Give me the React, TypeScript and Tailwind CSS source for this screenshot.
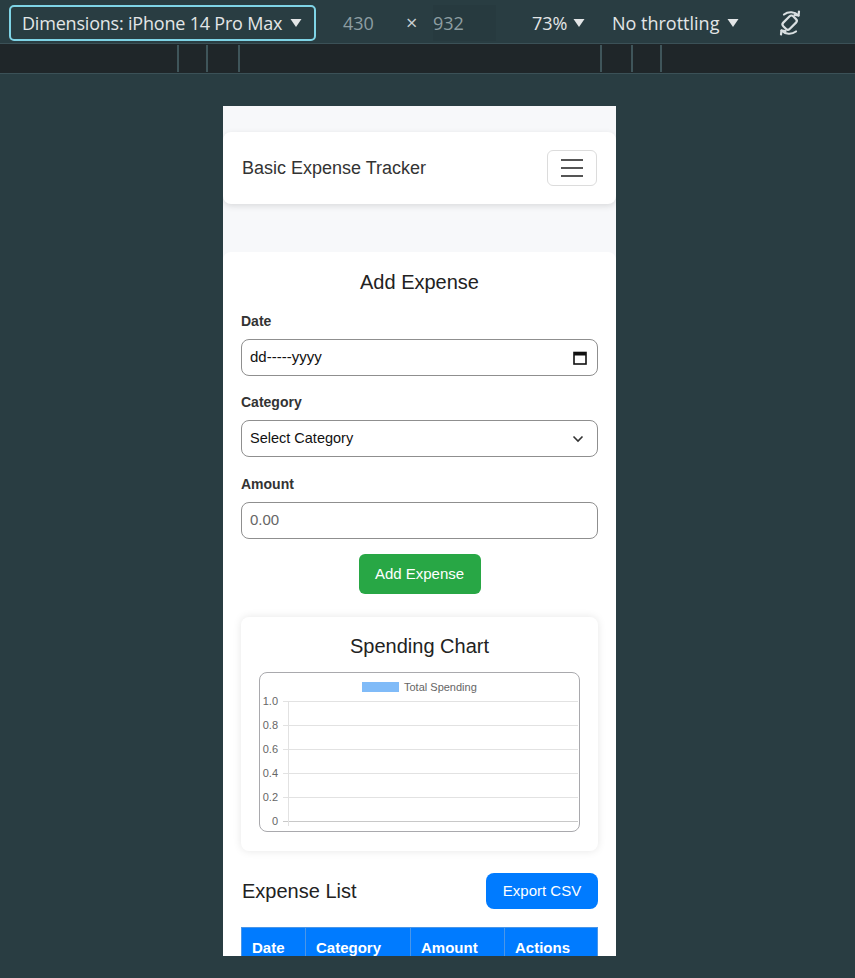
import React from 'react';

const Caret: React.FC<{ className?: string }> = ({ className }) => (
  <svg width="12" height="10" viewBox="0 0 12 10" className={className}>
    <path d="M0.5 1 L11.5 1 L6 9 Z" fill="currentColor" />
  </svg>
);

const RotateIcon: React.FC = () => (
  <svg width="30" height="30" viewBox="0 0 30 30" fill="none" stroke="#d9dfe1" strokeWidth="2.2" strokeLinecap="round">
    <rect x="10" y="8" width="9" height="14" rx="2.5" transform="rotate(45 15 15)" />
    <path d="M9 6.5 A11 11 0 0 1 23.5 7.5" />
    <path d="M21 23.5 A11 11 0 0 1 6.5 22.5" />
    <path d="M23.5 7.5 L24 3.5 M23.5 7.5 L19.5 7" />
    <path d="M6.5 22.5 L6 26.5 M6.5 22.5 L10.5 23" />
  </svg>
);

const Toolbar: React.FC = () => (
  <div className="h-[43px] pt-[3px] flex items-center bg-[#293d42] text-[#e3e6e7] font-['Open_Sans',sans-serif] text-[18px]">
    <div className="ml-[9px] h-[36px] w-[307px] border-2 border-[#7fd4e6] rounded-[5px] flex items-center pl-[11px] gap-[8px]">
      <span className="tracking-[-0.2px]">Dimensions: iPhone 14 Pro Max</span>
      <Caret />
    </div>
    <div className="ml-[20px] w-[70px] h-[36px] flex items-center pl-[7px] text-[#8d9ea2]">430</div>
    <div className="w-[27px] flex items-center text-[20px] text-[#c9d0d2]">×</div>
    <div className="w-[63px] h-[36px] flex items-center text-[#8d9ea2] bg-[#273a3f]">932</div>
    <div className="w-[36px]" />
    <div className="w-[80px] flex items-center gap-[6px]">
      <span>73%</span>
      <Caret />
    </div>
    <div className="w-[163px] flex items-center gap-[8px]">
      <span>No throttling</span>
      <Caret />
    </div>
    <div className="flex items-center">
      <RotateIcon />
    </div>
  </div>
);

const Ruler: React.FC = () => (
  <div className="h-[31px] bg-[#1f2629] border-t border-b border-[#3b5157] flex items-stretch py-[1px]">
    <div className="w-[177px]" />
    <div className="w-[2px] bg-[#3f555a]" />
    <div className="w-[27px]" />
    <div className="w-[2px] bg-[#3f555a]" />
    <div className="w-[30px]" />
    <div className="w-[2px] bg-[#3f555a]" />
    <div className="w-[360px]" />
    <div className="w-[2px] bg-[#3f555a]" />
    <div className="w-[29px]" />
    <div className="w-[2px] bg-[#3f555a]" />
    <div className="w-[27px]" />
    <div className="w-[2px] bg-[#3f555a]" />
  </div>
);

const CalendarIcon: React.FC = () => (
  <svg width="14" height="14" viewBox="0 0 14 14">
    <rect x="1" y="1.5" width="12" height="11.5" fill="none" stroke="#111" strokeWidth="1.6" />
    <rect x="1" y="1.5" width="12" height="3" fill="#111" />
  </svg>
);

const Chevron: React.FC = () => (
  <svg width="12" height="8" viewBox="0 0 12 8" fill="none" stroke="#333" strokeWidth="1.6">
    <path d="M1.5 1.5 L6 6 L10.5 1.5" />
  </svg>
);

const ChartArea: React.FC = () => {
  const ticks = ['1.0', '0.8', '0.6', '0.4', '0.2', '0'];
  return (
    <svg width="318" height="158" viewBox="0 0 318 158" className="block">
      <rect x="102" y="9" width="37" height="10" fill="#80bbf8" />
      <text x="144" y="18" fontSize="11" fill="#666" fontFamily="Liberation Sans, Arial, sans-serif">Total Spending</text>
      {ticks.map((t, i) => {
        const y = 28 + i * 24;
        return (
          <g key={t}>
            <line x1="23" y1={y + 0.5} x2="318" y2={y + 0.5} stroke={i === 5 ? '#c8c8c8' : '#e2e2e2'} strokeWidth="1" />
            <text x="18" y={y + 4} fontSize="11" fill="#666" textAnchor="end" fontFamily="Liberation Sans, Arial, sans-serif">{t}</text>
          </g>
        );
      })}
      <line x1="28.5" y1="28" x2="28.5" y2="153" stroke="#e2e2e2" strokeWidth="1" />
    </svg>
  );
};

const Field: React.FC<{ label: string; children: React.ReactNode; gap?: string }> = ({ label, children, gap = 'mt-[16px]' }) => (
  <div className={gap}>
    <div className="text-[14px] leading-[20px] font-bold text-[#333]">{label}</div>
    <div className="mt-[8px] h-[37px] border border-[#8f8f8f] rounded-[8px] flex items-center px-[8px] text-[15px] bg-white">
      {children}
    </div>
  </div>
);

export default function App() {
  return (
    <div className="w-[855px] h-[978px] bg-[#293d42] overflow-hidden">
      <Toolbar />
      <Ruler />
      <div className="ml-[223px] mt-[32px] w-[393px] h-[850px] bg-[#f7f8fa] overflow-hidden pt-[26px] font-['Liberation_Sans',Arial,sans-serif] text-[#222]">
        <nav className="h-[72px] bg-white rounded-[8px] shadow-[0_2px_6px_rgba(0,0,0,0.12)] flex items-center justify-between pl-[19px] pr-[19px]">
          <span className="text-[18px] text-[#333]">Basic Expense Tracker</span>
          <button className="w-[50px] h-[36px] border border-[#dcdcdc] rounded-[6px] flex flex-col items-center justify-center gap-[6px]">
            <span className="w-[22px] h-[2px] bg-[#555]" />
            <span className="w-[22px] h-[2px] bg-[#555]" />
            <span className="w-[22px] h-[2px] bg-[#555]" />
          </button>
        </nav>

        <main className="mt-[48px] bg-white rounded-t-[8px] px-[18px] pt-[18px] h-[800px]">
          <h2 className="text-center text-[20px] leading-[24px] text-[#222]">Add Expense</h2>

          <Field label="Date" gap="mt-[17px]">
            <span className="flex-1 text-[#111]">dd-----yyyy</span>
            <span className="mr-[2px]"><CalendarIcon /></span>
          </Field>
          <Field label="Category">
            <span className="flex-1 text-[#111] text-[14.5px]">Select Category</span>
            <span className="mr-[5px]"><Chevron /></span>
          </Field>
          <Field label="Amount" gap="mt-[17px]">
            <span className="text-[#666]">0.00</span>
          </Field>

          <div className="flex justify-center mt-[15px]">
            <button className="w-[122px] h-[40px] bg-[#28a745] rounded-[6px] text-white text-[15px]">Add Expense</button>
          </div>

          <section className="mt-[23px] rounded-[8px] bg-white shadow-[0_0_8px_rgba(0,0,0,0.1)] pt-[17px] pb-[19px] px-[18px]">
            <h3 className="text-center text-[20px] leading-[24px] text-[#222]">Spending Chart</h3>
            <div className="mt-[14px] h-[160px] border border-[#a9a9ad] rounded-[8px] overflow-hidden">
              <ChartArea />
            </div>
          </section>

          <div className="mt-[22px] flex items-center justify-between">
            <h3 className="text-[20px] text-[#222] ml-[1px]">Expense List</h3>
            <button className="w-[112px] h-[36px] bg-[#007bff] rounded-[8px] text-white text-[15px]">Export CSV</button>
          </div>

          <table className="mt-[18px] w-full border-collapse text-white text-[15px] font-bold">
            <thead>
              <tr className="bg-[#007bff]">
                <th className="text-left pl-[10px] w-[64px] border border-[#4a96e8] py-[10px] leading-[20px]">Date</th>
                <th className="text-left pl-[10px] w-[105px] border border-[#4a96e8] py-[10px] leading-[20px]">Category</th>
                <th className="text-left pl-[10px] w-[94px] border border-[#4a96e8] py-[10px] leading-[20px]">Amount</th>
                <th className="text-left pl-[10px] border border-[#4a96e8] py-[10px] leading-[20px]">Actions</th>
              </tr>
            </thead>
          </table>
        </main>
      </div>
    </div>
  );
}
